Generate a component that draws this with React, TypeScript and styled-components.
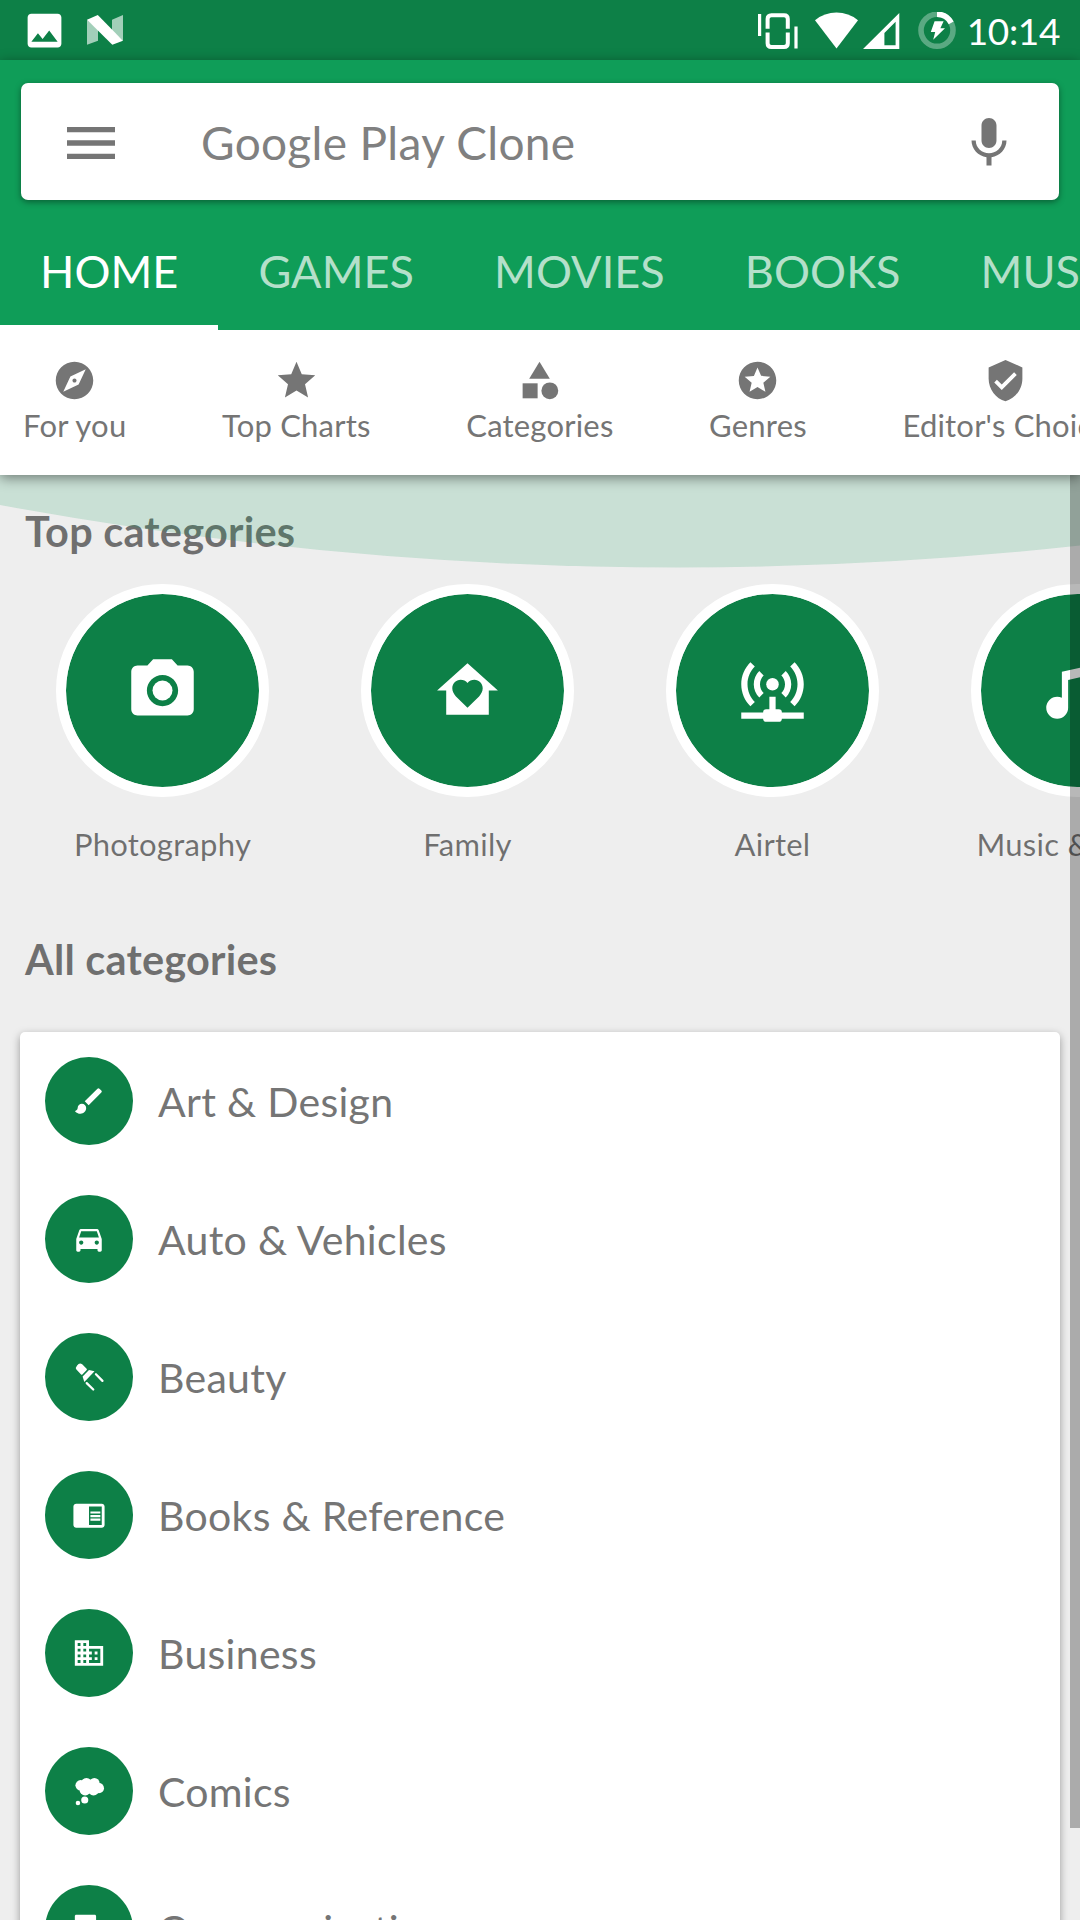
import React from "react";
import styled, { createGlobalStyle } from "styled-components";
import {
  MdBrush,
  MdBusiness,
  MdCameraAlt,
  MdChromeReaderMode,
  MdDirectionsCar,
  MdExplore,
  MdForum,
  MdImage,
  MdMenu,
  MdMic,
  MdStar,
  MdStars,
  MdVerifiedUser,
} from "react-icons/md";

const GREEN = "#0f9d58";
const DARK_GREEN = "#0d8047";
const MUTED = "rgba(0, 0, 0, 0.54)";

const GlobalStyle = createGlobalStyle`
  * { box-sizing: border-box; }
  body {
    margin: 0;
    background: #eeeeee;
    font-family: Lato, "Open Sans", sans-serif;
    overflow: hidden;
  }
  svg { display: block; flex: none; }
`;

const Screen = styled.div`
  width: 1080px;
  height: 1920px;
  display: flex;
  flex-direction: column;
  overflow: hidden;
  background: #eeeeee;
`;

const StatusBar = styled.div`
  height: 60px;
  flex: none;
  display: flex;
  align-items: center;
  padding: 0 20px 0 22px;
  background: ${DARK_GREEN};
  color: #fff;
`;

const StatusLeft = styled.div`
  flex: 1;
  display: flex;
  align-items: center;
  gap: 20px;
`;

const StatusRight = styled.div`
  display: flex;
  align-items: center;
`;

const StatusIcon = styled.svg<{ $gap: number }>`
  margin-top: 1px;
  margin-right: ${(p) => p.$gap}px;
`;

const Clock = styled.span`
  font-size: 37px;
  line-height: 44px;
  letter-spacing: -0.35px;
  margin-top: 2px;
`;

const Header = styled.header`
  flex: none;
  position: relative;
  z-index: 2;
  background: ${GREEN};
  box-shadow: 0 3px 12px rgba(0, 0, 0, 0.45);
`;

const SearchBar = styled.div`
  height: 117px;
  margin: 23px 21px 12px;
  padding: 2px 40px 0 38px;
  display: flex;
  align-items: center;
  background: #fff;
  border-radius: 7px;
  box-shadow: 0 2px 6px rgba(0, 0, 0, 0.4);
  color: #757575;
`;

const SearchTitle = styled.div`
  flex: 1;
  margin-left: 78px;
  font-size: 46px;
  line-height: 56px;
  letter-spacing: 0.33px;
  color: #808080;
`;

const Tabs = styled.nav`
  display: flex;
  height: 118px;
  overflow: hidden;
`;

const Tab = styled.div<{ $active?: boolean }>`
  flex: none;
  padding: 5px 40px 0;
  border-bottom: 5px solid ${(p) => (p.$active ? "#fff" : "transparent")};
  font-size: 45px;
  line-height: 108px;
  letter-spacing: 0.07px;
  color: ${(p) => (p.$active ? "#fff" : "rgba(255, 255, 255, 0.7)")};
`;

const SubNav = styled.nav`
  height: 145px;
  padding: 28px 0 0 23px;
  display: flex;
  gap: 95.6px;
  overflow: hidden;
  background: #fff;
`;

const SubNavItem = styled.div`
  flex: none;
  display: flex;
  flex-direction: column;
  align-items: center;
  gap: 4px;
  font-size: 31px;
  line-height: 36px;
  letter-spacing: 0.2px;
  color: #757575;
  white-space: nowrap;
`;

const Content = styled.main`
  flex: 1;
  min-height: 0;
  position: relative;
  overflow: hidden;
  padding-top: 32px;
`;

const Wave = styled.svg`
  position: absolute;
  top: 0;
  left: 0;
`;

const ScrollThumb = styled.div`
  position: absolute;
  top: 0;
  right: 0;
  width: 10px;
  height: 1353px;
  background: rgba(0, 0, 0, 0.28);
`;

const SectionTitle = styled.h2`
  margin: 0 0 0 25px;
  font-size: 41.5px;
  line-height: 48px;
  font-weight: 700;
  letter-spacing: 0.2px;
  color: ${MUTED};
`;

const TopRow = styled.div`
  display: flex;
  margin: 29px 0 73px;
  padding-left: 10px;
`;

const TopItem = styled.div`
  flex: none;
  width: 305px;
  display: flex;
  flex-direction: column;
  align-items: center;
  gap: 29px;
  font-size: 31px;
  line-height: 36px;
  letter-spacing: 0.25px;
  color: ${MUTED};
`;

const BigBadge = styled.div`
  width: 213px;
  height: 213px;
  display: grid;
  place-items: center;
  border: 10px solid #fff;
  border-radius: 50%;
  background: ${DARK_GREEN};
  background-clip: padding-box;
  color: #fff;
`;

const Card = styled.section`
  margin: 49px 20px 0;
  height: 1100px;
  background: #fff;
  border-radius: 5px;
  box-shadow: 0 3px 9px rgba(0, 0, 0, 0.36);
`;

const Row = styled.div`
  height: 138px;
  padding: 25px;
  display: flex;
  align-items: center;
  gap: 25px;
`;

const RowLabel = styled.span`
  padding-top: 2px;
  font-size: 41px;
  line-height: 48px;
  letter-spacing: 0.3px;
  color: #757575;
`;

const SmallBadge = styled.div`
  width: 88px;
  height: 88px;
  flex: none;
  display: grid;
  place-items: center;
  border-radius: 50%;
  background: ${DARK_GREEN};
  color: #fff;
`;

type IconProps = { size: number };

const Glyph = ({ size, children }: IconProps & { children: React.ReactNode }) => (
  <svg width={size} height={size} viewBox="0 0 24 24" fill="currentColor">
    {children}
  </svg>
);

const NougatIcon = () => (
  <svg width="36" height="30" viewBox="0 0 36 30" fill="#fff">
    <path opacity="0.62" d="M0 4.8L11 14V25.7L0 29.7zM25 4.7L36 0V25.7L25 16z" />
    <path d="M0 4.8L10.8 0L36 25.7L25.3 29.7z" />
  </svg>
);

const ShapesIcon = ({ size }: IconProps) => (
  <Glyph size={size}>
    <path d="M12 2l-5.5 9h11z" />
    <circle cx="17.5" cy="17.5" r="4.5" />
    <path d="M3 13.5h8v8H3z" />
  </Glyph>
);

const FamilyIcon = ({ size }: IconProps) => (
  <Glyph size={size}>
    <path
      fillRule="evenodd"
      d="M12 3L2 12h3v8h14v-8h3L12 3zM12 17.7L8.2 14C7.5 13.2 7 12.3 7 11.3 7 9.7 8.2 8.5 9.75 8.5c.87 0 1.7.4 2.25 1.05.55-.65 1.38-1.05 2.25-1.05C15.8 8.5 17 9.7 17 11.3c0 1-.5 1.9-1.2 2.7z"
    />
  </Glyph>
);

const AntennaIcon = ({ size }: IconProps) => (
  <Glyph size={size}>
    <g transform="translate(0 -1)">
      <path d="M4.93 3.93C3.12 5.74 2 8.24 2 11s1.12 5.26 2.93 7.07l1.41-1.41C4.89 15.22 4 13.22 4 11s.89-4.22 2.34-5.66zM19.07 3.93l-1.41 1.41C19.11 6.78 20 8.79 20 11s-.89 4.22-2.34 5.66l1.41 1.41C20.88 16.26 22 13.76 22 11s-1.12-5.26-2.93-7.07zM7.76 6.76C6.67 7.85 6 9.35 6 11s.67 3.15 1.76 4.24l1.41-1.41C8.45 13.11 8 12.11 8 11s.45-2.11 1.17-2.83zM16.24 6.76l-1.41 1.41C15.55 8.89 16 9.89 16 11s-.45 2.11-1.17 2.83l1.41 1.41C17.33 14.15 18 12.65 18 11s-.67-3.15-1.76-4.24z" />
      <circle cx="12" cy="11" r="2" />
      <path d="M11 15v4h-1a1 1 0 0 0-1 1H2v2h7a1 1 0 0 0 1 1h4a1 1 0 0 0 1-1h7v-2h-7a1 1 0 0 0-1-1h-1v-4z" />
    </g>
  </Glyph>
);

const MusicIcon = ({ size }: IconProps) => (
  <Glyph size={size}>
    <path d="M21 3v12.5a3.5 3.5 0 0 1-3.5 3.5 3.5 3.5 0 0 1-3.5-3.5 3.5 3.5 0 0 1 3.5-3.5c.54 0 1.05.12 1.5.34V6.47L9 8.6v8.9A3.5 3.5 0 0 1 5.5 21 3.5 3.5 0 0 1 2 17.5 3.5 3.5 0 0 1 5.5 14c.54 0 1.05.12 1.5.34V6z" />
  </Glyph>
);

const LipstickIcon = ({ size }: IconProps) => (
  <Glyph size={size}>
    <path d="M3.1 6.7Q2.2 5.3 3.6 3.8L4.6 2.8Q5.8 1.9 7.2 3L10.5 6.3Q10.6 6.8 10.2 7.2L7.3 10.3Q6.9 10.6 6.4 10.2z" />
    <path d="M12 7.1L15.9 7.9 8.7 15.5 7.5 11.6z" />
    <path
      d="M16.9 10.1l4.6 4.6M10.4 16.3l4.6 4.5"
      stroke="currentColor"
      strokeWidth="1.6"
      strokeLinecap="round"
    />
  </Glyph>
);

const ThoughtIcon = ({ size }: IconProps) => (
  <Glyph size={size}>
    <circle cx="6.1" cy="8" r="3.7" />
    <circle cx="10.2" cy="6.8" r="4" />
    <circle cx="15.8" cy="6.5" r="3.7" />
    <circle cx="19" cy="10" r="3.6" />
    <circle cx="15.2" cy="11.2" r="4" />
    <circle cx="9.3" cy="11.2" r="4" />
    <circle cx="9" cy="18.4" r="2.5" />
    <circle cx="4.2" cy="20.4" r="1.6" />
  </Glyph>
);

const VibrateIcon = () => (
  <StatusIcon $gap={17} width="40" height="38" viewBox="0 0 40 38" fill="none" stroke="#fff">
    <path strokeWidth="3.2" d="M1.6 2V24M38 14.4V36.4" />
    <path
      strokeWidth="4"
      d="M9.6 16.8V7Q9.6 3.2 13.4 3.2H26Q29.8 3.2 29.8 7V16.8M9.6 20.6V31.2Q9.6 35 13.4 35H26Q29.8 35 29.8 31.2V20.6"
    />
  </StatusIcon>
);

const WifiIcon = () => (
  <StatusIcon $gap={5} width="43" height="38" viewBox="0 0 43 38" fill="#fff">
    <path d="M21.5 36.5L0 8.2Q9.5 .6 21.5 .6T43 8.2z" />
  </StatusIcon>
);

const SignalIcon = () => (
  <StatusIcon $gap={18} width="37" height="38" viewBox="0 0 37 38" fill="#fff">
    <path fillRule="evenodd" d="M0 37L36.3 1V37zM21.4 33.3H32.6V9.7L21.4 21z" />
  </StatusIcon>
);

const BatteryIcon = () => (
  <StatusIcon $gap={11} width="38" height="38" viewBox="0 0 38 38" fill="none">
    <circle cx="19" cy="18.3" r="16" stroke="#fff" strokeOpacity="0.32" strokeWidth="5.6" />
    <path d="M19 2.3A16 16 0 0 1 33.2 10.9" stroke="#fff" strokeWidth="5.6" />
    <path d="M16.6 9.3H25.6L22.4 16.3H27L15.2 27.7L17.2 19.9H12.8z" fill="#fff" />
  </StatusIcon>
);

const TABS = ["HOME", "GAMES", "MOVIES", "BOOKS", "MUSIC"];

const SHORTCUTS = [
  { label: "For you", icon: <MdExplore size={45} /> },
  { label: "Top Charts", icon: <MdStar size={45} /> },
  { label: "Categories", icon: <ShapesIcon size={45} /> },
  { label: "Genres", icon: <MdStars size={45} /> },
  { label: "Editor's Choice", icon: <MdVerifiedUser size={45} /> },
];

const TOP_CATEGORIES = [
  { label: "Photography", icon: <MdCameraAlt size={75} /> },
  { label: "Family", icon: <FamilyIcon size={73} /> },
  { label: "Airtel", icon: <AntennaIcon size={75} /> },
  { label: "Music & Audio", icon: <MusicIcon size={75} /> },
];

const ALL_CATEGORIES = [
  { label: "Art & Design", icon: <MdBrush size={34} /> },
  { label: "Auto & Vehicles", icon: <MdDirectionsCar size={34} /> },
  { label: "Beauty", icon: <LipstickIcon size={34} /> },
  { label: "Books & Reference", icon: <MdChromeReaderMode size={34} /> },
  { label: "Business", icon: <MdBusiness size={34} /> },
  { label: "Comics", icon: <ThoughtIcon size={34} /> },
  { label: "Communication", icon: <MdForum size={34} /> },
];

export default function App() {
  return (
    <Screen>
      <GlobalStyle />
      <StatusBar>
        <StatusLeft>
          <MdImage size={45} />
          <NougatIcon />
        </StatusLeft>
        <StatusRight>
          <VibrateIcon />
          <WifiIcon />
          <SignalIcon />
          <BatteryIcon />
          <Clock>10:14</Clock>
        </StatusRight>
      </StatusBar>
      <Header>
        <SearchBar>
          <MdMenu size={64} />
          <SearchTitle>Google Play Clone</SearchTitle>
          <MdMic size={60} />
        </SearchBar>
        <Tabs>
          {TABS.map((tab, i) => (
            <Tab key={tab} $active={i === 0}>
              {tab}
            </Tab>
          ))}
        </Tabs>
        <SubNav>
          {SHORTCUTS.map((s) => (
            <SubNavItem key={s.label}>
              {s.icon}
              {s.label}
            </SubNavItem>
          ))}
        </SubNav>
      </Header>
      <Content>
        <SectionTitle>Top categories</SectionTitle>
        <TopRow>
          {TOP_CATEGORIES.map((c) => (
            <TopItem key={c.label}>
              <BigBadge>{c.icon}</BigBadge>
              {c.label}
            </TopItem>
          ))}
        </TopRow>
        <SectionTitle>All categories</SectionTitle>
        <Card>
          {ALL_CATEGORIES.map((c) => (
            <Row key={c.label}>
              <SmallBadge>{c.icon}</SmallBadge>
              <RowLabel>{c.label}</RowLabel>
            </Row>
          ))}
        </Card>
        <Wave width="1080" height="94" viewBox="0 0 1080 94">
          <path d="M0 0H1080V70.5Q540 129.5 0 30z" fill={GREEN} fillOpacity="0.17" />
        </Wave>
        <ScrollThumb />
      </Content>
    </Screen>
  );
}
